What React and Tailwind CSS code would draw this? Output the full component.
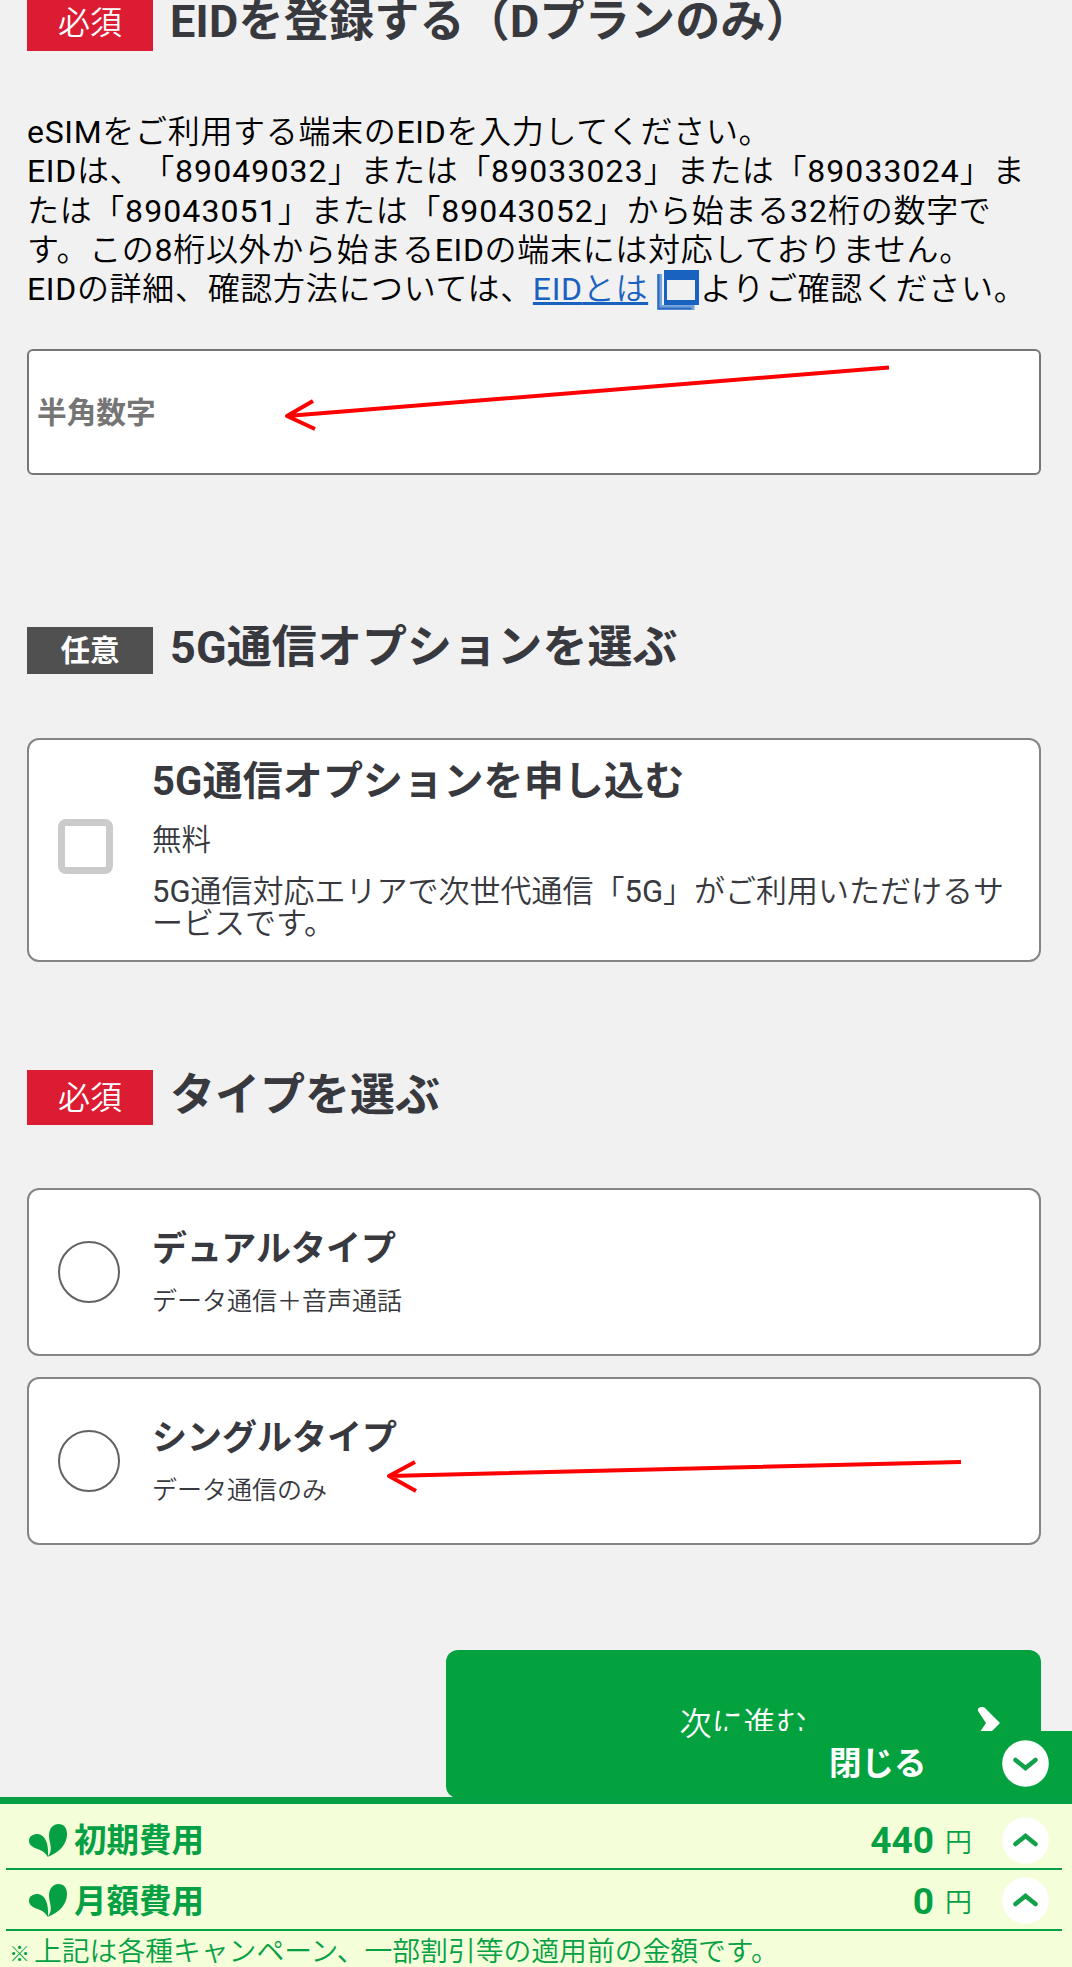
import { useState } from "react";

const Badge = ({ required, className }) => (
  <span
    className={`flex w-[126px] shrink-0 items-center justify-center text-white ${
      required ? "bg-[#dc1c33] text-[32px] font-[350]" : "bg-[#505050] text-[29.5px] font-bold"
    } ${className}`}
  >
    {required ? "必須" : "任意"}
  </span>
);

const Heading = ({ children, className }) => (
  <h2 className={`ml-[17px] text-[45px] leading-[46px] font-bold whitespace-nowrap text-[#38393e] ${className}`}>
    {children}
  </h2>
);

// Las letras latinas van en peso normal, el japonés algo más fino
const Latin = ({ children, className = "" }) => <span className={`font-normal ${className}`}>{children}</span>;

const Eid = ({ children }) => <Latin className="tracking-[1.1px]">{children}</Latin>;

// Flecha roja de anotación
const Arrow = ({ className, width, height, d }) => (
  <svg
    className={`absolute ${className}`}
    width={width}
    height={height}
    fill="none"
    stroke="#ff0000"
    strokeWidth="4"
    strokeLinejoin="round"
  >
    <path d={d} />
  </svg>
);

const WindowIcon = () => (
  <svg className="ml-[9px] inline-block align-top" width="43" height="40" viewBox="0 0 43 40">
    <path d="M2.5 4v33.5h35" fill="none" stroke="#76a2da" strokeWidth="5" />
    <path d="M1.5 4v34.5h33" fill="none" stroke="#2a6cc4" strokeWidth="2" />
    <path d="M7 0h35v35H7z" fill="#1a62c0" />
    <path d="M10 10h28v20H10z" fill="#f1f1f2" />
  </svg>
);

const Leaf = () => (
  <svg width="38" height="33" viewBox="0 0 38 33" fill="#06a044">
    <path d="M0 17C0 12 4 10 9 10C16 11 20 19 19 33C16 29 14 27 10 25.5C4 23.5 0 21 0 17Z" />
    <path d="M18.5 33C25 26 20 19 20 11.5C20 4 24.5 0 29.5 0C35 0 38 4 38 10C38 20 31 28 18.5 33Z" />
  </svg>
);

const RoundChevron = ({ down }) => (
  <svg className="ml-auto" width="47" height="47" viewBox="0 0 47 47" fill="none">
    <circle cx="23.5" cy="23.5" r="23.3" fill="white" />
    <path
      d={down ? "M13.5 20L23.5 28L33.5 20" : "M13.5 27L23.5 19L33.5 27"}
      stroke="#12a04b"
      strokeWidth="4.5"
      strokeLinecap="round"
    />
  </svg>
);

const TypeCard = ({ title, description, selected, onSelect }) => (
  <button
    onClick={onSelect}
    className="flex h-[168px] w-full rounded-xl border-2 border-[#858585] bg-white text-left"
  >
    <span
      className={`mt-[51px] ml-[29px] size-[62px] shrink-0 rounded-full border-2 border-[#626266] ${
        selected ? "bg-[#06a044]" : ""
      }`}
    />
    <span className="ml-[32px] block pt-[40px] text-[#38393e]">
      <span className="block text-[35px] leading-[40px] font-bold">{title}</span>
      <span className="mt-[16px] block text-[25px] leading-[32px] font-[350]">{description}</span>
    </span>
  </button>
);

const FeeRow = ({ label, amount, className }) => (
  <div className={`mr-[10px] ml-[6px] flex items-center border-b-2 border-[#06a044] ${className}`}>
    <span className="ml-[23px]">
      <Leaf />
    </span>
    <span className="mt-[2px] ml-[7px] text-[32.5px] leading-[40px] font-bold">{label}</span>
    <span className="mt-[2px] ml-auto text-[37px] leading-[40px] font-bold">{amount}</span>
    <span className="mt-[5px] ml-[11px] text-[27px] leading-[36px] font-[350]">円</span>
    <span className="ml-[30px] mr-[13px]">
      <RoundChevron />
    </span>
  </div>
);

const tipos = [
  { id: "dual", title: "デュアルタイプ", description: "データ通信＋音声通話" },
  { id: "single", title: "シングルタイプ", description: "データ通信のみ" },
];

export default function App() {
  const [tipo, setTipo] = useState(null);

  return (
    <div className="relative h-[1967px] w-[1072px] overflow-hidden bg-[#f1f1f2] font-['Roboto','Noto_Sans_CJK_JP',sans-serif] [text-spacing-trim:space-all]">
      <main className="pr-[31px] pl-[27px]">
        {/* EID */}
        <div className="flex h-[51px]">
          <Badge required className="pb-[6px]" />
          <Heading className="-mt-[1px] tracking-[0.25px]">EIDを登録する（Dプランのみ）</Heading>
        </div>

        <p className="mt-[62px] text-[32px] leading-[39.3px] font-[350] tracking-[0.68px] whitespace-nowrap text-black">
          <Latin>eSIM</Latin>をご利用する端末の<Latin>EID</Latin>を入力してください。
          <br />
          <Latin>EID</Latin>は、「<Eid>89049032</Eid>」または「<Eid>89033023</Eid>」または「<Eid>89033024</Eid>」ま
          <br />
          たは「<Eid>89043051</Eid>」または「<Eid>89043052</Eid>」から始まる<Eid>32</Eid>桁の数字で
          <br />
          す。この<Latin>8</Latin>桁以外から始まる<Latin>EID</Latin>の端末には対応しておりません。
          <br />
          <Latin>EID</Latin>の詳細、確認方法については、
          <a className="text-[#1a62c0] underline" href="#eid"><Latin>EID</Latin>とは</a>
          <WindowIcon />
          よりご確認ください。
        </p>

        <div className="relative mt-[39px]">
          <input
            className="block h-[126px] w-full rounded-md border-2 border-[#767676] bg-white px-[8px] text-[29.7px] font-bold placeholder:text-[#757575]"
            placeholder="半角数字"
          />
          <Arrow className="top-[10px] left-[250px]" width="620" height="80" d="M612 8.5L10 57M36 42L10 57L38 70" />
        </div>

        {/* Opción 5G */}
        <div className="mt-[149px] flex h-[53px]">
          <Badge className="mt-[3px] h-[47px]" />
          <Heading className="mt-[1px] tracking-[0.1px]">5G通信オプションを選ぶ</Heading>
        </div>

        <label className="mt-[61px] flex h-[224px] rounded-xl border-2 border-[#858585] bg-white">
          <input
            type="checkbox"
            className="mt-[79px] ml-[29px] size-[55px] shrink-0 appearance-none rounded-lg border-7 border-[#cbcbcb] bg-white checked:bg-[#06a044]"
          />
          <span className="ml-[39px] block pt-[18px] whitespace-nowrap text-[#38393e]">
            <span className="block text-[40px] leading-[48px] font-bold tracking-[0.15px]">5G通信オプションを申し込む</span>
            <span className="mt-[16px] block text-[29.5px] leading-[36px] font-[350]">無料</span>
            <span className="mt-[18px] block text-[31px] leading-[32px] font-[350]">
              <Latin>5G</Latin>通信対応エリアで次世代通信「<Latin>5G</Latin>」がご利用いただけるサ
              <br />
              ービスです。
            </span>
          </span>
        </label>

        {/* Tipo */}
        <div className="mt-[108px] flex h-[55px]">
          <Badge required />
          <Heading className="mt-[3px]">タイプを選ぶ</Heading>
        </div>

        <div className="relative mt-[63px] flex flex-col gap-[21px]">
          {tipos.map((t) => (
            <TypeCard
              key={t.id}
              title={t.title}
              description={t.description}
              selected={tipo === t.id}
              onSelect={() => setTipo(t.id)}
            />
          ))}
          <Arrow className="top-[265px] left-[350px]" width="600" height="50" d="M584 9L12 23M38 9L12 23L39 38" />
        </div>

        <button className="relative mt-[105px] ml-auto block h-[148px] w-[595px] rounded-xl bg-[#03a23f] text-[32px] text-white">
          <span className="block font-[350]">次に進む</span>
          <svg className="absolute top-[56px] right-[40px]" width="24" height="34" viewBox="0 0 24 34">
            <path d="M1 5C0 1 6 0 8 2L23 17L8 32C6 34 0 33 1 29L9 17Z" fill="white" />
          </svg>
        </button>
      </main>

      {/* Panel fijo de costes */}
      <aside className="absolute inset-x-0 bottom-0 text-[#06a044]">
        <button className="ml-auto flex h-[66px] w-[360px] items-center bg-[#03a23f] pr-[23px] pb-[2px] pl-[117px] text-[32.5px] font-bold text-white">
          <span className="pt-[2px]">閉じる</span>
          <RoundChevron down />
        </button>
        <div className="h-[170px] border-t-7 border-[#06a044] bg-[#f4ffda]">
          <FeeRow label="初期費用" amount="440" className="h-[66px] pt-[8px]" />
          <FeeRow label="月額費用" amount="0" className="h-[61px] pt-[2px]" />
          <p className="h-[36px] pl-[9px] text-[27.8px] leading-[41px] font-[350] whitespace-nowrap">
            <span className="mr-[4px] text-[21px] font-medium">※</span>
            上記は各種キャンペーン、一部割引等の適用前の金額です。
          </p>
        </div>
      </aside>
    </div>
  );
}
